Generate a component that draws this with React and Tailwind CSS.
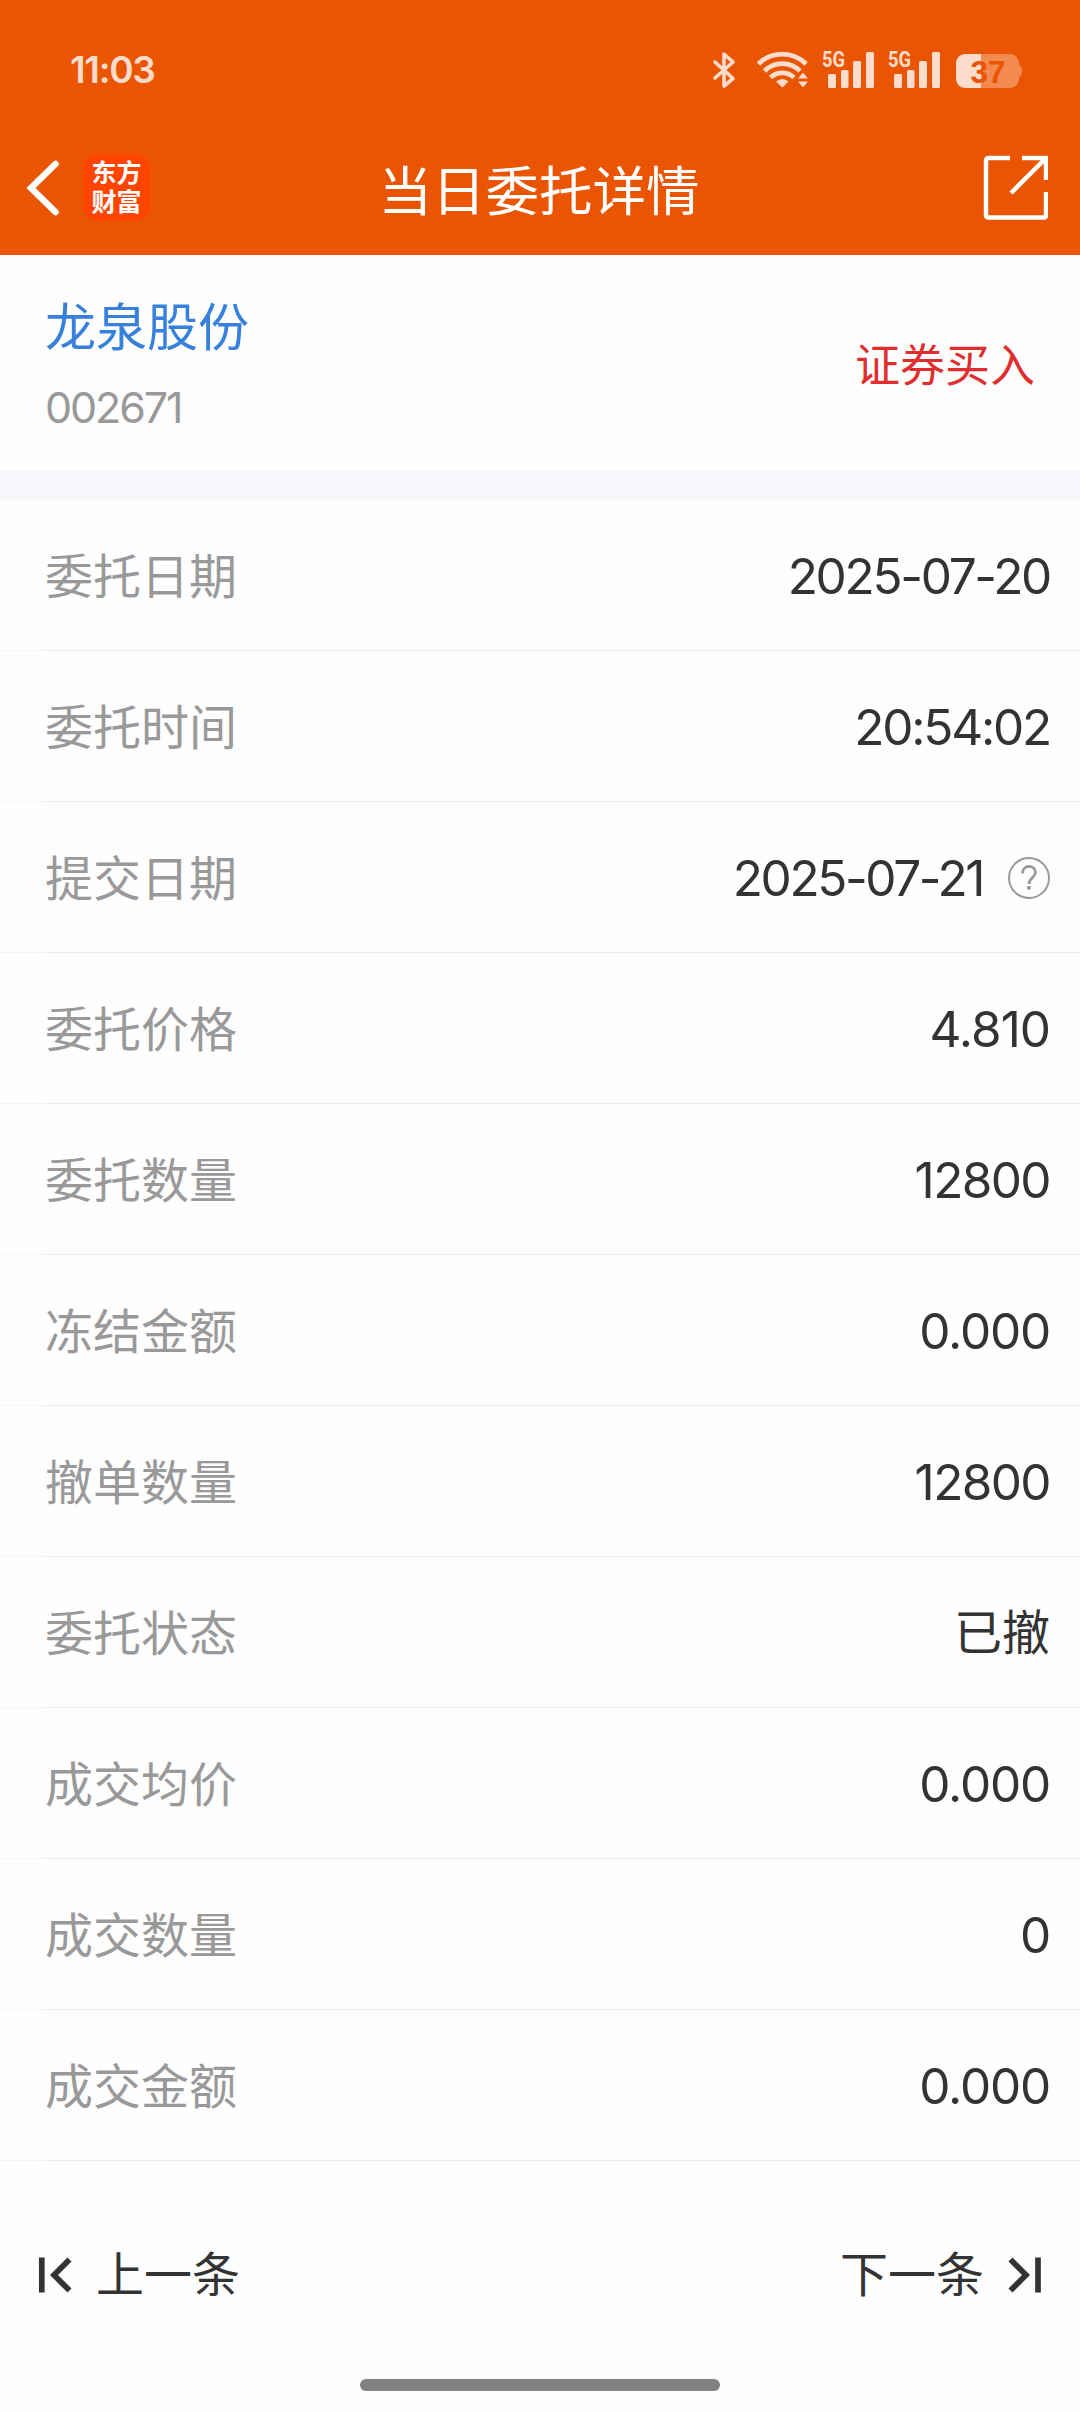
const rows = [
  { label: '委托日期', value: '2025-07-20', style: 'text-[49.5px] tracking-[-2.3px]' },
  { label: '委托时间', value: '20:54:02', style: 'text-[49.5px] tracking-[-2.2px]' },
  { label: '提交日期', value: '2025-07-21', style: 'text-[49.5px] tracking-[-2.4px]', help: true },
  { label: '委托价格', value: '4.810', style: 'text-[49.5px] tracking-[-1px]' },
  { label: '委托数量', value: '12800', style: 'text-[49.5px] tracking-[-1.6px]' },
  { label: '冻结金额', value: '0.000', style: 'text-[49.5px] tracking-[-1.2px]' },
  { label: '撤单数量', value: '12800', style: 'text-[49.5px] tracking-[-1.6px]' },
  { label: '委托状态', value: '已撤', style: 'text-[48px] relative -top-px' },
  { label: '成交均价', value: '0.000', style: 'text-[49.5px] tracking-[-1.2px]' },
  { label: '成交数量', value: '0', style: 'text-[49.5px] tracking-[-1.2px]' },
  { label: '成交金额', value: '0.000', style: 'text-[49.5px] tracking-[-1.2px]' },
];

const Signal = () => (
  <svg width="54" height="40" viewBox="0 0 54 40" fill="#fddccb" className="overflow-visible">
    <text x="0" y="17" fontSize="22" fontWeight="700" textLength="23" lengthAdjust="spacingAndGlyphs" className="font-['Roboto',sans-serif]">5G</text>
    <rect x="6" y="24" width="8" height="14" rx="1.5" />
    <rect x="19" y="20" width="7.5" height="18" rx="1.5" />
    <rect x="31" y="11" width="8" height="27" rx="1.5" />
    <rect x="44" y="2" width="8" height="36" rx="1.5" />
  </svg>
);

const StatusBar = () => (
  <div className="flex h-[140px] items-center justify-between pl-[70px] pr-[58px]">
    <span className="pb-0.5 font-['Inter',sans-serif] text-[37px] font-semibold leading-none tracking-[-1.3px] text-[#fddccb]">11:03</span>
    <div className="flex items-center">
      <svg width="24" height="40" viewBox="0 0 24 40" fill="none" stroke="#fddccb" strokeWidth="3.6" strokeLinejoin="round" strokeLinecap="round" className="mr-[21px]">
        <path d="M3 12 L21 28.5 L12 36 V4 L21 12 L3 28" />
      </svg>
      <svg width="52" height="40" viewBox="0 0 52 40" fill="none" stroke="#fddccb" strokeWidth="4.8" className="mr-[13px]">
        <path d="M1.5 14 A33.5 33.5 0 0 1 49 14" />
        <path d="M7.5 21 A25 25 0 0 1 43 21" />
        <path d="M13.5 27.5 A17 17 0 0 1 37 27.5" />
        <path d="M25.3 37.5 L19 31.5 Q25.3 26.5 31.6 31.5 Z" fill="#fddccb" stroke="none" />
        <path d="M46 22.5 L51 28.5 H41 Z M46 37.5 L51 31.5 H41 Z" fill="#fddccb" stroke="none" />
      </svg>
      <Signal />
      <div className="w-3" />
      <Signal />
      <svg width="68" height="40" viewBox="0 0 68 40" className="ml-[12px]">
        <defs>
          <clipPath id="battery">
            <rect x="2" y="4" width="63" height="34" rx="9" />
          </clipPath>
        </defs>
        <g clipPath="url(#battery)">
          <rect x="0" y="0" width="27" height="40" fill="#fddccb" />
          <rect x="27" y="0" width="41" height="40" fill="#f38a50" />
        </g>
        <path d="M65 15 Q68 16 68 21 Q68 26 65 27 Z" fill="#f38a50" />
        <text x="16.5" y="32.5" fontSize="32" fontWeight="700" textLength="35" lengthAdjust="spacingAndGlyphs" fill="#e95502" className="font-['Liberation_Sans',sans-serif]">37</text>
      </svg>
    </div>
  </div>
);

const NavBar = () => (
  <div className="grid h-[115px] grid-cols-3 items-center pb-5 pl-[25px] pr-[32px]">
    <div className="flex items-center gap-6">
      <svg width="34" height="56" viewBox="0 0 34 56" fill="none" stroke="#fff" strokeWidth="6.5" strokeLinecap="round">
        <path d="M30.5 4 L6 28 L30.5 52" strokeLinejoin="miter" />
      </svg>
      <div className="flex h-[67px] w-[67px] items-center justify-center rounded-[14px] bg-[#ff4400] pb-1">
        <p className="w-[50px] font-['Noto_Sans_CJK_SC',sans-serif] text-[25px] font-bold leading-[29px] text-white">东方财富</p>
      </div>
    </div>
    <h1 className="whitespace-nowrap pl-[5px] pt-[8px] text-center text-[53.5px] leading-none text-white">当日委托详情</h1>
    <svg width="65" height="65" viewBox="0 0 65 65" fill="none" stroke="#fff" strokeWidth="4.5" className="justify-self-end">
      <path d="M27 3 H6 Q3 3 3 6 V60 Q3 62.500 6 62.500 H60.500 Q63 62.500 63 60 V37" />
      <path d="M39 3 H63 V25" />
      <path d="M28 38 L62 4" />
    </svg>
  </div>
);

const HelpIcon = () => (
  <svg width="42" height="42" viewBox="0 0 42 42" fill="none" stroke="#999" className="relative -top-px ml-[25px]">
    <circle cx="21" cy="21" r="20" strokeWidth="2" />
    <path d="M14.5 16.5 C14.5 7 27.5 7.5 27.5 15.5 C27.5 20.5 21 20.5 21 27" strokeWidth="2.7" />
    <rect x="19.2" y="29" width="3.6" height="3.6" fill="#999" stroke="none" />
  </svg>
);

const Row = ({ label, value, style, help }) => (
  <div className="flex h-[151px] flex-col">
    <div className="flex flex-1 items-center justify-between pl-[45px] pr-[30px] pt-1">
      <span className="text-[48px] leading-none text-[#999]">{label}</span>
      <span className="flex items-center">
        <span className={`leading-none text-[#333] ${style}`}>{value}</span>
        {help && <HelpIcon />}
      </span>
    </div>
    <div className="flex h-px">
      <div className="w-[45px] bg-[#f6f6f6]" />
      <div className="flex-1 bg-[#ebebeb]" />
    </div>
  </div>
);

const Footer = () => (
  <div className="flex h-[218px] items-center justify-between pl-[38px] pr-[38px] pt-[10px] text-[48px] leading-none text-[#333]">
    <button className="flex items-center gap-[24px]">
      <svg width="34" height="36" viewBox="0 0 34 36" fill="none" stroke="#333" strokeWidth="5.7">
        <path d="M3.8 0.5 V35.5 M31.5 2.5 L16 18 L31.5 33.5" />
      </svg>
      上一条
    </button>
    <button className="flex items-center gap-[24px]">
      下一条
      <svg width="34" height="36" viewBox="0 0 34 36" fill="none" stroke="#333" strokeWidth="5.7">
        <path d="M30 0.5 V35.5 M2.5 2.5 L18 18 L2.5 33.5" />
      </svg>
    </button>
  </div>
);

const App = () => (
  <div className="flex h-[2412px] w-[1080px] flex-col overflow-hidden bg-[#fefefe] font-['Inter','Noto_Sans_CJK_SC',sans-serif]">
    <header className="h-[255px] bg-[#e95502]">
      <StatusBar />
      <NavBar />
    </header>

    <section className="flex h-[215px] items-center justify-between pl-[45px] pr-[45px] pt-[5px]">
      <div className="flex flex-col gap-[33px]">
        <span className="text-[51px] leading-none text-[#3780dc]">龙泉股份</span>
        <span className="text-[43px] leading-none tracking-[-2.1px] text-[#999]">002671</span>
      </div>
      <span className="text-[45px] leading-none text-[#e02d2d]">证券买入</span>
    </section>

    <div className="h-[30px] bg-[#f6f7fa]" />

    <main>
      {rows.map((row) => (
        <Row key={row.label} {...row} />
      ))}
    </main>

    <Footer />

    <div className="mx-auto h-3 w-[360px] rounded-full bg-[#818181]" />
  </div>
);

export default App;
